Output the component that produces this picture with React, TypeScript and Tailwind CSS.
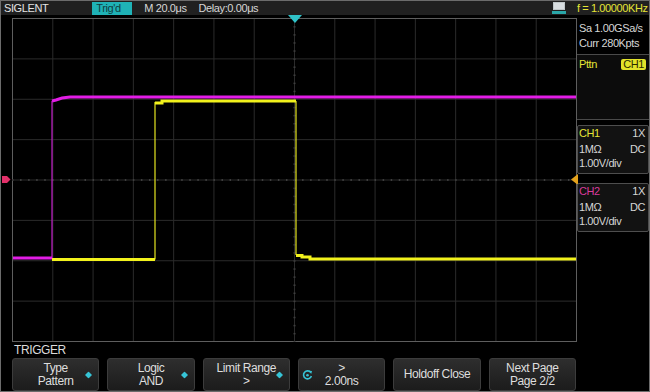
import React from 'react';

const COLS = 14;
const ROWS = 8;
const GW = 565;
const GH = 324;

function Grid() {
  const dx = (GW - 1) / COLS;
  const dy = (GH - 1) / ROWS;
  const cx = dx * 7 + 0.5;
  const cy = dy * 4 + 0.5;
  const ticksX = Array.from({ length: COLS * 5 + 1 }, (_, i) => 0.5 + (i * dx) / 5);
  const ticksY = Array.from({ length: ROWS * 5 + 1 }, (_, i) => 0.5 + (i * dy) / 5);

  return (
    <svg width={GW} height={GH} className="block">
      <rect x="0.5" y="0.5" width={GW - 1} height={GH - 1} fill="#000" stroke="#5e5e5e" />
      {Array.from({ length: COLS - 1 }, (_, i) => (
        <line key={'v' + i} x1={0.5 + (i + 1) * dx} x2={0.5 + (i + 1) * dx} y1="1" y2={GH - 1} stroke="#2b2b2b" />
      ))}
      {Array.from({ length: ROWS - 1 }, (_, i) => (
        <line key={'h' + i} x1="1" x2={GW - 1} y1={0.5 + (i + 1) * dy} y2={0.5 + (i + 1) * dy} stroke="#2b2b2b" />
      ))}
      {/* center cross ticks */}
      {ticksX.map((x, i) => (
        <rect key={'tx' + i} x={x - 0.5} y={cy - 1} width="1.5" height="2" fill="#3e3e3e" />
      ))}
      {ticksY.map((y, i) => (
        <rect key={'ty' + i} x={cx - 1} y={y - 0.5} width="2" height="1.5" fill="#3e3e3e" />
      ))}

      {/* CH2 */}
      <path d="M1 240 H40 V83" fill="none" stroke="#c21fc8" strokeWidth="1.2" />
      <path d="M1 240 H40" fill="none" stroke="#e21de6" strokeWidth="3" />
      <path d="M40 83 L44 82 L50 80 L58 79 H564" fill="none" stroke="#e21de6" strokeWidth="3" />

      {/* CH1 */}
      <path d="M143 241.5 V84 M284 83 V237" fill="none" stroke="#e4e420" strokeWidth="1.2" />
      <path d="M40 241.5 H143" fill="none" stroke="#f2f21c" strokeWidth="3" />
      <path d="M143 85 H150 V83 H284" fill="none" stroke="#f2f21c" strokeWidth="3" />
      <path d="M284 237.5 H290 V239 H298 V241 H564" fill="none" stroke="#f2f21c" strokeWidth="3" />
    </svg>
  );
}

function Diamond() {
  return (
    <svg width="7" height="7" viewBox="0 0 7 7" className="absolute right-[6px] top-1/2 -translate-y-1/2">
      <path d="M3.5 0 L7 3.5 L3.5 7 L0 3.5 Z" fill="#36c4d6" />
    </svg>
  );
}

function Knob() {
  return (
    <svg width="11" height="11" viewBox="0 0 11 11" className="absolute left-[3px] top-1/2 -translate-y-1/2">
      <path d="M8.8 3 A4 4 0 1 0 9.4 6.5" fill="none" stroke="#36c4d6" strokeWidth="1.6" />
      <path d="M7 1.2 L10 1.6 L9.2 4.5 Z" fill="#36c4d6" />
      <circle cx="5.5" cy="5.8" r="1.3" fill="#36c4d6" />
    </svg>
  );
}

type Btn = { top?: string; bottom?: string; single?: string; diamond?: boolean; knob?: boolean };

const buttons: Btn[] = [
  { top: 'Type', bottom: 'Pattern', diamond: true },
  { top: 'Logic', bottom: 'AND', diamond: true },
  { top: 'Limit Range', bottom: '>', diamond: true },
  { top: '>', bottom: '2.00ns', knob: true },
  { single: 'Holdoff Close' },
  { top: 'Next Page', bottom: 'Page 2/2' },
];

function ChannelBox({ name, color }: { name: string; color: string }) {
  return (
    <div className="relative h-[49px] border border-[#4e4e4e] rounded-[2px] bg-[#121212] pl-[1px] pr-[3px] pt-[1px]">
      <div className="flex justify-between leading-[13px]">
        <span className={color}>{name}</span>
        <span>1X</span>
      </div>
      <div className="flex justify-between leading-[14px] mt-[2px]">
        <span>1MΩ</span>
        <span>DC</span>
      </div>
      <div className="leading-[14px]">1.00V/div</div>
    </div>
  );
}

export default function App() {
  return (
    <div className="w-[650px] h-[392px] overflow-hidden bg-black border border-[#6c6c6c] flex flex-col font-['Liberation_Sans',Arial,sans-serif] text-[11px] text-[#d6d6d6] tracking-[-0.4px]">
      {/* top status bar */}
      <div className="h-[14px] bg-[#202020] flex items-center leading-[14px] relative">
        <span className="ml-[3px] text-[#e4e4e4]">SIGLENT</span>
        <span className="ml-[44px] h-[13px] w-[40px] bg-[#1fb2b6] text-[#103c3e] pl-[4px] leading-[13px]">Trig'd</span>
        <span className="ml-[12px]">M 20.0μs</span>
        <span className="ml-[12px]">Delay:0.00μs</span>
        <div className="flex-1" />
        <svg width="14" height="12" viewBox="0 0 14 12" className="mr-[11px]">
          <rect x="1" y="0" width="12" height="8" fill="#bfc6c8" />
          <rect x="2" y="1" width="10" height="6" fill="#d8dde0" />
          <rect x="0" y="9" width="14" height="3" fill="#2aa6a8" />
        </svg>
        <span className="text-[#e4e436] mr-[1px] w-[71px]">f = 1.00000KHz</span>
      </div>

      {/* scope area */}
      <div className="flex mt-[3px] h-[324px]">
        <div className="w-[11px] relative">
          <svg width="9" height="9" viewBox="0 0 9 9" className="absolute left-[1px] top-[157px]">
            <path d="M0 1 H5 L8.5 4.5 L5 8 H0 Z" fill="#e3306a" />
          </svg>
        </div>
        <div className="relative w-[565px]">
          <Grid />
          <svg width="14" height="8" viewBox="0 0 14 8" className="absolute left-[276px] -top-[3px]">
            <path d="M0 0 H14 L7 8 Z" fill="#2fc2c8" />
          </svg>
          <svg width="7" height="11" viewBox="0 0 7 11" className="absolute -right-[1px] top-[156px]">
            <path d="M7 0 V11 L0 5.5 Z" fill="#e3a21c" />
          </svg>
        </div>
        <div className="flex-1 flex flex-col">
          <div className="pl-[2px] leading-[15px] mt-[3px]">Sa 1.00GSa/s</div>
          <div className="pl-[2px] leading-[15px]">Curr 280Kpts</div>
          <div className="mt-[3px] h-[66px] border-y border-[#4a4a4a] bg-[#0c0c0c] flex justify-between items-start pl-[2px] pr-[3px] pt-[3px]">
            <span className="text-[#e4e436] leading-[13px]">Pttn</span>
            <span className="bg-[#e2e22a] text-[#2a2a00] rounded-[2px] px-[2px] leading-[11px] mt-[1px]">CH1</span>
          </div>
          <div className="mt-[5px]">
            <ChannelBox name="CH1" color="text-[#e4e436]" />
          </div>
          <div className="mt-[9px]">
            <ChannelBox name="CH2" color="text-[#d83a9c]" />
          </div>
        </div>
      </div>

      {/* soft menu */}
      <div className="h-[15px] pl-[13px] leading-[16px] text-[12px] text-[#dcdcdc]">TRIGGER</div>
      <div className="mt-[1px] ml-[11px] w-[564px] h-[33px] grid grid-cols-6 gap-[8px]">
        {buttons.map((b, i) => (
          <div
            key={i}
            className="relative rounded-[3px] border border-[#3c3c3c] bg-gradient-to-b from-[#2e2e2e] to-[#1c1c1c] flex flex-col items-center justify-center text-[12px] leading-[13px] text-[#dedede]"
          >
            {b.single ? (
              <span>{b.single}</span>
            ) : (
              <>
                <span>{b.top}</span>
                <span>{b.bottom}</span>
              </>
            )}
            {b.diamond && <Diamond />}
            {b.knob && <Knob />}
          </div>
        ))}
      </div>
    </div>
  );
}
